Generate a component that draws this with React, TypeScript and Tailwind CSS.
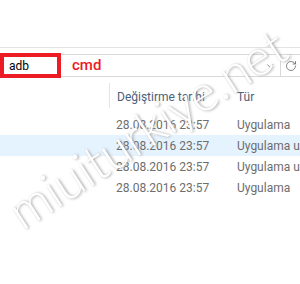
import { ChevronDown, RotateCw } from "lucide-react";

const rows = [
    { date: "28.08.2016 23:57", type: "Uygulama", hover: false },
    { date: "28.08.2016 23:57", type: "Uygulama uzantısı", hover: true },
    { date: "28.08.2016 23:57", type: "Uygulama uzantısı", hover: false },
    { date: "28.08.2016 23:57", type: "Uygulama", hover: false },
];

const App = () => {
    return (
        <div className="relative w-[300px] h-[284px] overflow-hidden bg-white font-['Roboto','Liberation_Sans',sans-serif] text-[12px]">
            {/* Ribbon bottom */}
            <div className="h-[47px]"></div>
            <div className="h-px bg-[#e3e3e3]"></div>
            <div className="h-[6px]"></div>

            {/* Address bar */}
            <div className="flex items-center h-[23px] border-y border-[#d9d9d9]">
                <div className="flex items-center shrink-0 w-[61px] h-[25px] -my-px border-4 border-[#ed1c24] pl-[5px] text-black leading-none">
                    adb
                </div>
                <span className="ml-[11px] text-[15px] font-medium text-[#ed1c24] leading-none">cmd</span>
                <div className="flex-1"></div>
                <ChevronDown size={10} strokeWidth={1.6} className="shrink-0 text-[#555] mr-[5px]" />
                <div className="shrink-0 w-px h-full bg-[#d9d9d9]"></div>
                <RotateCw size={12} strokeWidth={1.4} className="shrink-0 text-[#555] ml-[4px] mr-[3px]" />
            </div>

            {/* Column header */}
            <div className="flex items-start h-[37px] pt-[6px] whitespace-nowrap">
                <div className="shrink-0 w-[109px]"></div>
                <div className="shrink-0 w-px h-[25px] bg-[#e5e5e5]"></div>
                <div className="shrink-0 w-[127px] pl-[7px] pt-[8px] text-[#4c607a] leading-none">Değiştirme tarihi</div>
                <div className="pt-[8px] text-[#4c607a] leading-none">Tür</div>
            </div>

            {/* Rows */}
            <div className="flex flex-col">
                {rows.map((row, i) => (
                    <div
                        key={i}
                        className={`flex items-center h-[21px] whitespace-nowrap text-[#6d6d6d] ${row.hover ? "bg-[#e5f3ff]" : ""}`}
                    >
                        <div className="shrink-0 w-[237px] pl-[116px]">{row.date}</div>
                        <div className="shrink-0">{row.type}</div>
                    </div>
                ))}
            </div>

            {/* Watermark */}
            <span className="absolute left-[26px] top-[186px] origin-bottom-left -rotate-[33deg] whitespace-nowrap font-['Lato','Open_Sans',sans-serif] font-light text-[50px] leading-none text-white [text-shadow:1px_1px_3px_#a0a0a0]">
                miuiturkiye.net
            </span>
        </div>
    );
};

export default App;
